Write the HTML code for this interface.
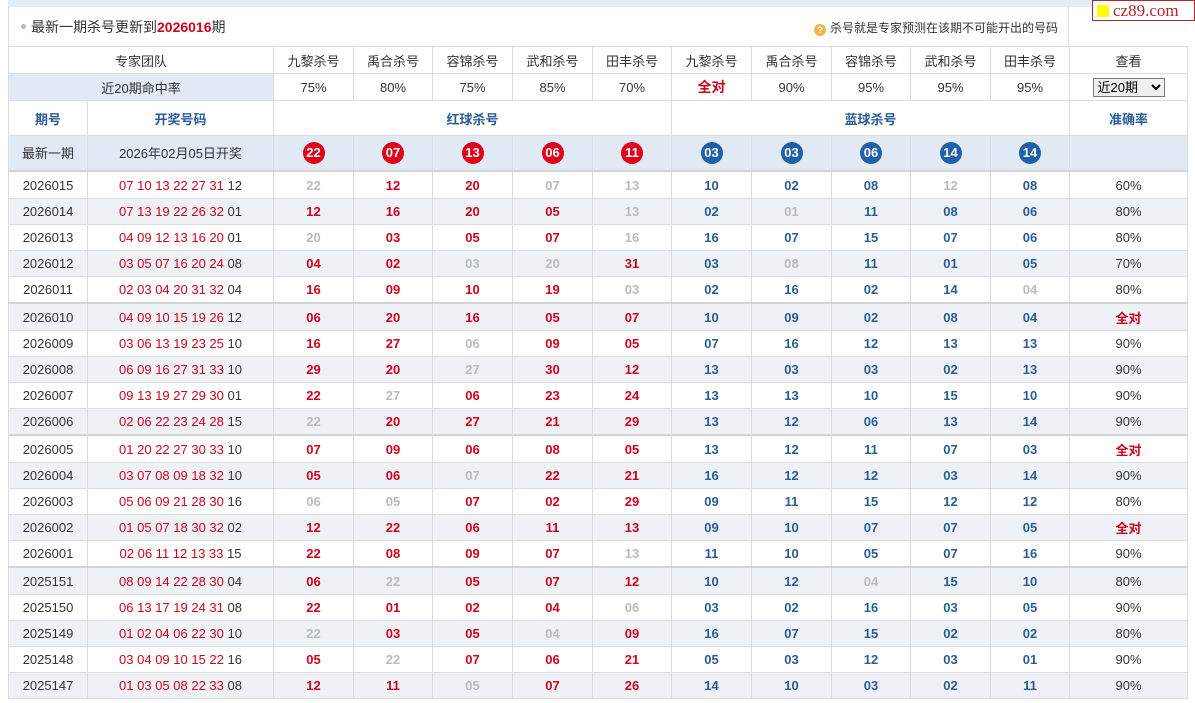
<!DOCTYPE html>
<html><head><meta charset="utf-8"><style>
*{margin:0;padding:0;box-sizing:border-box}
body{width:1195px;height:703px;background:#fff;font-family:"Liberation Sans","Noto Sans CJK SC",sans-serif;position:relative;overflow:hidden;color:#333}
.topbar{position:absolute;left:8px;top:0;width:1187px;height:7px;background:#e4ecf6}
.title{position:absolute;left:8px;top:7px;width:1061px;height:39px;border-left:1px solid #ddd;border-right:1px solid #ddd}
.title .dot{position:absolute;left:12px;top:17px;width:5px;height:5px;border-radius:50%;background:#bbb}
.title .t{position:absolute;left:22px;top:10px;font-size:14px;color:#333}
.title .t b{color:#d0021b}
.hint{position:absolute;left:805px;top:12px;font-size:12px;color:#333}
.hint i{display:inline-block;width:12px;height:12px;border-radius:50%;background:#f5b547;color:#fff;font-size:9px;font-style:normal;text-align:center;line-height:12px;margin-right:4px;vertical-align:-1px;font-weight:bold}
.wm{position:absolute;left:1092px;top:0;width:103px;height:21px;border:1px solid #b0282f;background:#fff;font-family:"Liberation Serif",serif;color:#b0282f;font-size:17px;line-height:19px;padding-left:20px}
.wm:before{content:"";position:absolute;left:4px;top:4px;width:12px;height:12px;background:#ffff00}
table{position:absolute;left:8px;top:46px;border-collapse:collapse;table-layout:fixed;width:1179px}
td{border:1px solid #dcdcdc;text-align:center;font-size:13px;padding:0;overflow:hidden;white-space:nowrap}
tr.h td{height:27px}
tr.lab td{height:35px;color:#2a5c9a;font-weight:bold}
tr.lat td{height:35px;background:#e1e9f4}
tr.d td{height:26px;font-size:13px}
tr.s td{background:#eef2f7}
tr.g td{border-top:2px solid #d4d4d4;height:28px;padding-top:2px}
.bl{background:#e1e9f4}
.r{color:#d0021b;font-weight:bold}
.b{color:#2a5c9a;font-weight:bold}
.x{color:#bbb;font-weight:bold}
.dr{color:#d0021b}
.ball{display:inline-block;width:22px;height:22px;border-radius:50%;color:#fff;font-weight:bold;font-size:13px;line-height:22px}
.rb{background:#e0001b}.bb{background:#2060a8}
.all{color:#d0021b;font-weight:bold;font-size:14px}
select{font-size:13px;width:72px;height:19px;border:1px solid #777;font-family:"Liberation Sans","Noto Sans CJK SC",sans-serif}
</style></head><body>
<div class="topbar"></div>
<div class="title"><span class="dot"></span><span class="t">最新一期杀号更新到<b>2026016</b>期</span><span class="hint"><i>?</i>杀号就是专家预测在该期不可能开出的号码</span></div>
<div class="wm">cz89.com</div>
<table>
<colgroup><col style="width:79px"><col style="width:186px"><col style="width:80px"><col style="width:79px"><col style="width:80px"><col style="width:80px"><col style="width:79px"><col style="width:80px"><col style="width:80px"><col style="width:79px"><col style="width:80px"><col style="width:79px"><col style="width:118px"></colgroup>
<tr class="h"><td colspan="2">专家团队</td><td>九黎杀号</td><td>禹合杀号</td><td>容锦杀号</td><td>武和杀号</td><td>田丰杀号</td><td>九黎杀号</td><td>禹合杀号</td><td>容锦杀号</td><td>武和杀号</td><td>田丰杀号</td><td>查看</td></tr>
<tr class="h"><td colspan="2" class="bl">近20期命中率</td><td>75%</td><td>80%</td><td>75%</td><td>85%</td><td>70%</td><td class="all">全对</td><td>90%</td><td>95%</td><td>95%</td><td>95%</td><td><select><option>近20期</option></select></td></tr>
<tr class="lab"><td>期号</td><td>开奖号码</td><td colspan="5">红球杀号</td><td colspan="5">蓝球杀号</td><td>准确率</td></tr>
<tr class="lat"><td>最新一期</td><td>2026年02月05日开奖</td><td><span class="ball rb">22</span></td><td><span class="ball rb">07</span></td><td><span class="ball rb">13</span></td><td><span class="ball rb">06</span></td><td><span class="ball rb">11</span></td><td><span class="ball bb">03</span></td><td><span class="ball bb">03</span></td><td><span class="ball bb">06</span></td><td><span class="ball bb">14</span></td><td><span class="ball bb">14</span></td><td></td></tr>
<tr class="d g"><td>2026015</td><td><span class="dr">07 10 13 22 27 31</span> 12</td><td class="x">22</td><td class="r">12</td><td class="r">20</td><td class="x">07</td><td class="x">13</td><td class="b">10</td><td class="b">02</td><td class="b">08</td><td class="x">12</td><td class="b">08</td><td>60%</td></tr>
<tr class="d s"><td>2026014</td><td><span class="dr">07 13 19 22 26 32</span> 01</td><td class="r">12</td><td class="r">16</td><td class="r">20</td><td class="r">05</td><td class="x">13</td><td class="b">02</td><td class="x">01</td><td class="b">11</td><td class="b">08</td><td class="b">06</td><td>80%</td></tr>
<tr class="d"><td>2026013</td><td><span class="dr">04 09 12 13 16 20</span> 01</td><td class="x">20</td><td class="r">03</td><td class="r">05</td><td class="r">07</td><td class="x">16</td><td class="b">16</td><td class="b">07</td><td class="b">15</td><td class="b">07</td><td class="b">06</td><td>80%</td></tr>
<tr class="d s"><td>2026012</td><td><span class="dr">03 05 07 16 20 24</span> 08</td><td class="r">04</td><td class="r">02</td><td class="x">03</td><td class="x">20</td><td class="r">31</td><td class="b">03</td><td class="x">08</td><td class="b">11</td><td class="b">01</td><td class="b">05</td><td>70%</td></tr>
<tr class="d"><td>2026011</td><td><span class="dr">02 03 04 20 31 32</span> 04</td><td class="r">16</td><td class="r">09</td><td class="r">10</td><td class="r">19</td><td class="x">03</td><td class="b">02</td><td class="b">16</td><td class="b">02</td><td class="b">14</td><td class="x">04</td><td>80%</td></tr>
<tr class="d s g"><td>2026010</td><td><span class="dr">04 09 10 15 19 26</span> 12</td><td class="r">06</td><td class="r">20</td><td class="r">16</td><td class="r">05</td><td class="r">07</td><td class="b">10</td><td class="b">09</td><td class="b">02</td><td class="b">08</td><td class="b">04</td><td class="all">全对</td></tr>
<tr class="d"><td>2026009</td><td><span class="dr">03 06 13 19 23 25</span> 10</td><td class="r">16</td><td class="r">27</td><td class="x">06</td><td class="r">09</td><td class="r">05</td><td class="b">07</td><td class="b">16</td><td class="b">12</td><td class="b">13</td><td class="b">13</td><td>90%</td></tr>
<tr class="d s"><td>2026008</td><td><span class="dr">06 09 16 27 31 33</span> 10</td><td class="r">29</td><td class="r">20</td><td class="x">27</td><td class="r">30</td><td class="r">12</td><td class="b">13</td><td class="b">03</td><td class="b">03</td><td class="b">02</td><td class="b">13</td><td>90%</td></tr>
<tr class="d"><td>2026007</td><td><span class="dr">09 13 19 27 29 30</span> 01</td><td class="r">22</td><td class="x">27</td><td class="r">06</td><td class="r">23</td><td class="r">24</td><td class="b">13</td><td class="b">13</td><td class="b">10</td><td class="b">15</td><td class="b">10</td><td>90%</td></tr>
<tr class="d s"><td>2026006</td><td><span class="dr">02 06 22 23 24 28</span> 15</td><td class="x">22</td><td class="r">20</td><td class="r">27</td><td class="r">21</td><td class="r">29</td><td class="b">13</td><td class="b">12</td><td class="b">06</td><td class="b">13</td><td class="b">14</td><td>90%</td></tr>
<tr class="d g"><td>2026005</td><td><span class="dr">01 20 22 27 30 33</span> 10</td><td class="r">07</td><td class="r">09</td><td class="r">06</td><td class="r">08</td><td class="r">05</td><td class="b">13</td><td class="b">12</td><td class="b">11</td><td class="b">07</td><td class="b">03</td><td class="all">全对</td></tr>
<tr class="d s"><td>2026004</td><td><span class="dr">03 07 08 09 18 32</span> 10</td><td class="r">05</td><td class="r">06</td><td class="x">07</td><td class="r">22</td><td class="r">21</td><td class="b">16</td><td class="b">12</td><td class="b">12</td><td class="b">03</td><td class="b">14</td><td>90%</td></tr>
<tr class="d"><td>2026003</td><td><span class="dr">05 06 09 21 28 30</span> 16</td><td class="x">06</td><td class="x">05</td><td class="r">07</td><td class="r">02</td><td class="r">29</td><td class="b">09</td><td class="b">11</td><td class="b">15</td><td class="b">12</td><td class="b">12</td><td>80%</td></tr>
<tr class="d s"><td>2026002</td><td><span class="dr">01 05 07 18 30 32</span> 02</td><td class="r">12</td><td class="r">22</td><td class="r">06</td><td class="r">11</td><td class="r">13</td><td class="b">09</td><td class="b">10</td><td class="b">07</td><td class="b">07</td><td class="b">05</td><td class="all">全对</td></tr>
<tr class="d"><td>2026001</td><td><span class="dr">02 06 11 12 13 33</span> 15</td><td class="r">22</td><td class="r">08</td><td class="r">09</td><td class="r">07</td><td class="x">13</td><td class="b">11</td><td class="b">10</td><td class="b">05</td><td class="b">07</td><td class="b">16</td><td>90%</td></tr>
<tr class="d s g"><td>2025151</td><td><span class="dr">08 09 14 22 28 30</span> 04</td><td class="r">06</td><td class="x">22</td><td class="r">05</td><td class="r">07</td><td class="r">12</td><td class="b">10</td><td class="b">12</td><td class="x">04</td><td class="b">15</td><td class="b">10</td><td>80%</td></tr>
<tr class="d"><td>2025150</td><td><span class="dr">06 13 17 19 24 31</span> 08</td><td class="r">22</td><td class="r">01</td><td class="r">02</td><td class="r">04</td><td class="x">06</td><td class="b">03</td><td class="b">02</td><td class="b">16</td><td class="b">03</td><td class="b">05</td><td>90%</td></tr>
<tr class="d s"><td>2025149</td><td><span class="dr">01 02 04 06 22 30</span> 10</td><td class="x">22</td><td class="r">03</td><td class="r">05</td><td class="x">04</td><td class="r">09</td><td class="b">16</td><td class="b">07</td><td class="b">15</td><td class="b">02</td><td class="b">02</td><td>80%</td></tr>
<tr class="d"><td>2025148</td><td><span class="dr">03 04 09 10 15 22</span> 16</td><td class="r">05</td><td class="x">22</td><td class="r">07</td><td class="r">06</td><td class="r">21</td><td class="b">05</td><td class="b">03</td><td class="b">12</td><td class="b">03</td><td class="b">01</td><td>90%</td></tr>
<tr class="d s"><td>2025147</td><td><span class="dr">01 03 05 08 22 33</span> 08</td><td class="r">12</td><td class="r">11</td><td class="x">05</td><td class="r">07</td><td class="r">26</td><td class="b">14</td><td class="b">10</td><td class="b">03</td><td class="b">02</td><td class="b">11</td><td>90%</td></tr>
</table>
</body></html>
